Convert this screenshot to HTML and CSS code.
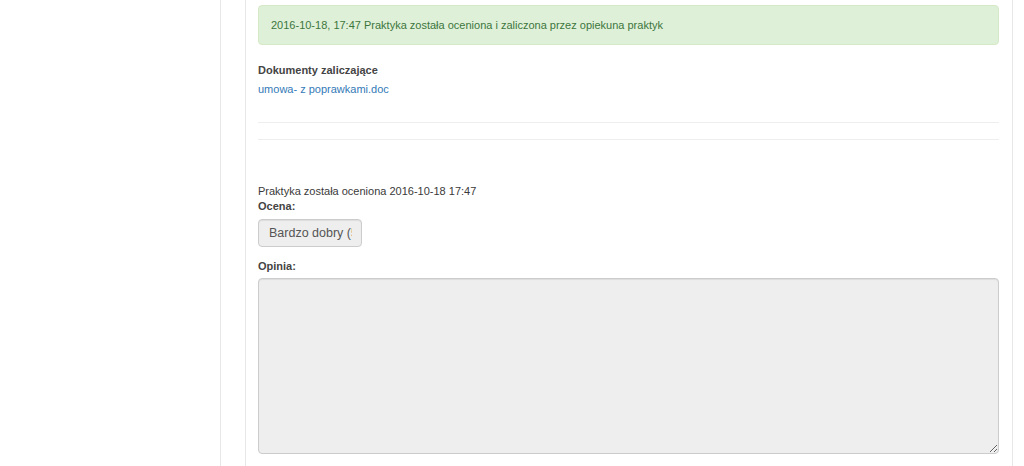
FILE: index.html
```html
<!DOCTYPE html>
<html>
<head>
<meta charset="UTF-8">
<title>Praktyka - ocena</title>
<link rel="stylesheet" href="styles.css">
</head>
<body>
<div class="strona">
	<div class="menu"></div>
	<div class="odstep"></div>
	<div class="panel">
		<div class="alert">2016-10-18, 17:47 Praktyka została oceniona i zaliczona przez opiekuna praktyk</div>

		<div class="dokumenty">
			<strong>Dokumenty zaliczające</strong><br>
			<a href="#">umowa- z poprawkami.doc</a>
		</div>

		<hr class="linia1">
		<hr class="linia2">

		<div class="ocena">
			Praktyka została oceniona 2016-10-18 17:47<br>
			<label>Ocena:</label>
		</div>
		<div class="pole-ocena"><span>Bardzo dobry (5)</span></div>

		<label class="etykieta">Opinia:</label>
		<textarea class="opinia" readonly></textarea>
	</div>
</div>
</body>
</html>
```

FILE: styles.css
```css
body{
	margin:0;
	font-family:"Liberation Sans", Arial, sans-serif;
	font-size:11px;
	color:#3a3a3a;
	background-color:white;
}
.strona{
	display:flex;
	height:466px;
	overflow:hidden;
}
.menu{
	width:220px;
	border-right:1px solid #e7e7e7;
	flex-shrink:0;
}
.odstep{
	width:24px;
	flex-shrink:0;
}
.panel{
	width:741px;
	border-left:1px solid #e7e7e7;
	border-right:1px solid #e7e7e7;
	padding:5px 13px 0 12px;
	display:flex;
	flex-direction:column;
	align-items:flex-start;
}
.alert{
	align-self:stretch;
	background-color:#dff0d8;
	border:1px solid #d6e9c6;
	border-radius:4px;
	color:#3c763d;
	padding:11px 12px;
	line-height:16px;
}
.dokumenty{
	margin-top:16px;
	line-height:19px;
}
.dokumenty strong{
	color:#444;
}
.dokumenty a{
	color:#337ab7;
	text-decoration:none;
}
hr{
	align-self:stretch;
	border:0;
	border-top:1px solid #eee;
	margin:0;
}
.linia1{
	margin-top:23px;
}
.linia2{
	margin-top:16px;
}
.ocena{
	margin-top:44px;
	line-height:15px;
}
label{
	font-weight:bold;
	color:#444;
}
.pole-ocena{
	margin-top:5px;
	width:83px;
	height:26px;
	line-height:26px;
	padding:0 9px 0 10px;
	background-color:#eee;
	border:1px solid #ccc;
	border-radius:4px;
	color:#555;
	font-size:12.5px;
	box-shadow:inset 0 1px 1px rgba(0,0,0,.075);
}
.pole-ocena span{
	display:block;
	white-space:nowrap;
	overflow:hidden;
}
.etykieta{
	margin-top:12px;
	line-height:15px;
}
.opinia{
	align-self:stretch;
	margin-top:4px;
	height:176px;
	box-sizing:border-box;
	background-color:#eee;
	border:1px solid #ccc;
	border-radius:4px;
	box-shadow:inset 0 1px 1px rgba(0,0,0,.075);
	font-family:inherit;
}
```
